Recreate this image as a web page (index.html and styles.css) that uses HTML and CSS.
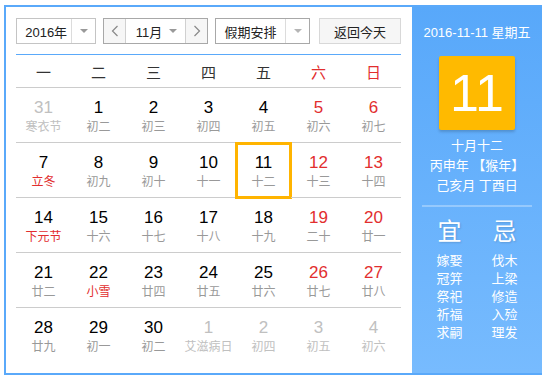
FILE: index.html
```html
<!DOCTYPE html>
<html lang="zh-CN">
<head>
    <meta charset="UTF-8">
    <title>万年历</title>
    <link rel="stylesheet" href="styles.css">
</head>
<body>
    <div class="calendar">
        <div class="main">
            <div class="toolbar">
                <div class="select year-select">
                    <span class="sel-text">2016年</span>
                    <span class="sel-arrow"><i class="tri"></i></span>
                </div>
                <div class="select month-select">
                    <span class="nav-btn">
                        <svg width="8" height="12" viewBox="0 0 8 12"><polyline points="6.5,1 1.5,6 6.5,11" fill="none" stroke="#888" stroke-width="1.2"/></svg>
                    </span>
                    <span class="month-text">11月<i class="tri"></i></span>
                    <span class="nav-btn next">
                        <svg width="8" height="12" viewBox="0 0 8 12"><polyline points="1.5,1 6.5,6 1.5,11" fill="none" stroke="#888" stroke-width="1.2"/></svg>
                    </span>
                </div>
                <div class="select holiday-select">
                    <span class="sel-text">假期安排</span>
                    <span class="sel-arrow"><i class="tri light"></i></span>
                </div>
                <button class="today-btn">返回今天</button>
            </div>

            <div class="week">
                <span>一</span><span>二</span><span>三</span><span>四</span><span>五</span>
                <span class="red">六</span><span class="red">日</span>
            </div>

            <div class="days">
                <div class="day other"><b>31</b><em>寒衣节</em></div>
                <div class="day"><b>1</b><em>初二</em></div>
                <div class="day"><b>2</b><em>初三</em></div>
                <div class="day"><b>3</b><em>初四</em></div>
                <div class="day"><b>4</b><em>初五</em></div>
                <div class="day weekend"><b>5</b><em>初六</em></div>
                <div class="day weekend"><b>6</b><em>初七</em></div>

                <div class="day"><b>7</b><em class="fest">立冬</em></div>
                <div class="day"><b>8</b><em>初九</em></div>
                <div class="day"><b>9</b><em>初十</em></div>
                <div class="day"><b>10</b><em>十一</em></div>
                <div class="day today"><b>11</b><em>十二</em></div>
                <div class="day weekend"><b>12</b><em>十三</em></div>
                <div class="day weekend"><b>13</b><em>十四</em></div>

                <div class="day"><b>14</b><em class="fest">下元节</em></div>
                <div class="day"><b>15</b><em>十六</em></div>
                <div class="day"><b>16</b><em>十七</em></div>
                <div class="day"><b>17</b><em>十八</em></div>
                <div class="day"><b>18</b><em>十九</em></div>
                <div class="day weekend"><b>19</b><em>二十</em></div>
                <div class="day weekend"><b>20</b><em>廿一</em></div>

                <div class="day"><b>21</b><em>廿二</em></div>
                <div class="day"><b>22</b><em class="fest">小雪</em></div>
                <div class="day"><b>23</b><em>廿四</em></div>
                <div class="day"><b>24</b><em>廿五</em></div>
                <div class="day"><b>25</b><em>廿六</em></div>
                <div class="day weekend"><b>26</b><em>廿七</em></div>
                <div class="day weekend"><b>27</b><em>廿八</em></div>

                <div class="day last"><b>28</b><em>廿九</em></div>
                <div class="day last"><b>29</b><em>初一</em></div>
                <div class="day last"><b>30</b><em>初二</em></div>
                <div class="day last other"><b>1</b><em>艾滋病日</em></div>
                <div class="day last other"><b>2</b><em>初四</em></div>
                <div class="day last other"><b>3</b><em>初五</em></div>
                <div class="day last other"><b>4</b><em>初六</em></div>
            </div>
        </div>

        <div class="side">
            <div class="side-date">2016-11-11 星期五</div>
            <div class="big-day">11</div>
            <div class="lunar">
                <div>十月十二</div>
                <div>丙申年 【猴年】</div>
                <div>己亥月 丁酉日</div>
            </div>
            <div class="divider"></div>
            <div class="almanac">
                <div class="col">
                    <div class="title">宜</div>
                    <div>嫁娶</div>
                    <div>冠笄</div>
                    <div>祭祀</div>
                    <div>祈福</div>
                    <div>求嗣</div>
                </div>
                <div class="col">
                    <div class="title">忌</div>
                    <div>伐木</div>
                    <div>上梁</div>
                    <div>修造</div>
                    <div>入殓</div>
                    <div>理发</div>
                </div>
            </div>
        </div>
    </div>
</body>
</html>
```

FILE: styles.css
```css
* {
    box-sizing: border-box;
}
body {
    margin: 0;
    font-family: "Liberation Sans", "Noto Sans CJK SC", sans-serif;
    background: #fff;
    color: #000;
}
.calendar {
    display: flex;
    width: 538px;
    height: 370px;
    margin: 5px 0 0 4px;
    border: 2px solid #5aa9fa;
    border-right: none;
    background: #fff;
}

/* 左侧日历 */
.main {
    width: 406px;
    padding: 11px 11px 0 10px;
}
.toolbar {
    display: flex;
    height: 26px;
    margin-bottom: 10px;
    font-size: 13px;
    color: #222;
}
.select {
    display: flex;
    height: 26px;
    border: 1px solid #c4c4c4;
    background: #fff;
}
.sel-text {
    display: flex;
    align-items: center;
    justify-content: center;
}
.sel-arrow {
    display: flex;
    align-items: center;
    justify-content: center;
    border-left: 1px solid #dcdcdc;
}
.tri {
    display: inline-block;
    width: 0;
    height: 0;
    border-left: 4px solid transparent;
    border-right: 4px solid transparent;
    border-top: 4px solid #999;
}
.tri.light {
    border-top-color: #b5b5b5;
}
.year-select {
    width: 80px;
}
.year-select .sel-text {
    width: 55px;
    padding-left: 4px;
}
.year-select .sel-arrow {
    width: 24px;
}
.month-select {
    width: 105px;
    margin-left: 7px;
    border-color: #a8a8a8;
}
.nav-btn {
    display: flex;
    align-items: center;
    justify-content: center;
    width: 22px;
    background: #f6f6f6;
    border-right: 1px solid #d0d0d0;
}
.nav-btn.next {
    border-right: none;
    border-left: 1px solid #d0d0d0;
}
.month-text {
    display: flex;
    align-items: center;
    justify-content: center;
    gap: 7px;
    flex: 1;
    padding-left: 2px;
}
.holiday-select {
    width: 95px;
    margin-left: 7px;
    border-color: #a8a8a8;
}
.holiday-select .sel-text {
    width: 69px;
}
.holiday-select .sel-arrow {
    flex: 1;
}
.today-btn {
    width: 82px;
    height: 26px;
    margin-left: 9px;
    padding: 0;
    border: 1px solid #d8d8d8;
    background: #f6f6f6;
    font-family: inherit;
    font-size: 13px;
    color: #222;
}

.week {
    display: grid;
    grid-template-columns: repeat(7, 55px);
    height: 34px;
    border-top: 1px solid #5aa9fa;
    border-bottom: 1px solid #ccc;
    font-size: 15px;
    color: #333;
}
.week span {
    display: flex;
    align-items: center;
    justify-content: center;
}
.week .red {
    color: #e22e2e;
}

.days {
    display: grid;
    grid-template-columns: repeat(7, 55px);
}
.day {
    position: relative;
    display: flex;
    flex-direction: column;
    align-items: center;
    height: 55px;
    padding-top: 10px;
    border-bottom: 1px solid #ccc;
}
.day.last {
    border-bottom: none;
}
.day b {
    font-weight: normal;
    font-size: 17px;
    line-height: 20px;
}
.day em {
    font-style: normal;
    font-size: 12px;
    line-height: 18px;
    color: #999;
}
.day.weekend b {
    color: #e22e2e;
}
.day em.fest {
    color: #e22e2e;
}
.day.other b,
.day.other em {
    color: #c0c0c0;
}
.day.today {
    outline: 3px solid #ffb400;
    outline-offset: -2px;
}

/* 右侧详情 */
.side {
    width: 130px;
    height: 366px;
    padding-top: 16px;
    background: linear-gradient(#58a8fa, #77bbfe);
    color: #fff;
    text-align: center;
}
.side-date {
    font-size: 13px;
    line-height: 20px;
}
.big-day {
    width: 76px;
    height: 74px;
    margin: 13px auto 0;
    background: #ffba00;
    border-radius: 2px;
    box-shadow: 0 2px 3px rgba(0,0,0,0.18);
    font-size: 52px;
    line-height: 74px;
}
.lunar {
    margin-top: 6px;
    font-size: 13px;
    line-height: 20px;
}
.divider {
    width: 110px;
    height: 2px;
    margin: 9px auto 0;
    background: rgba(255,255,255,0.3);
}
.almanac {
    display: flex;
    justify-content: center;
    margin-top: 10px;
}
.col {
    width: 55px;
    font-size: 13px;
    line-height: 18px;
}
.col .title {
    font-size: 24px;
    line-height: 30px;
    margin-bottom: 5px;
    text-shadow: 1px 1px 2px rgba(0,0,0,0.15);
}
```
